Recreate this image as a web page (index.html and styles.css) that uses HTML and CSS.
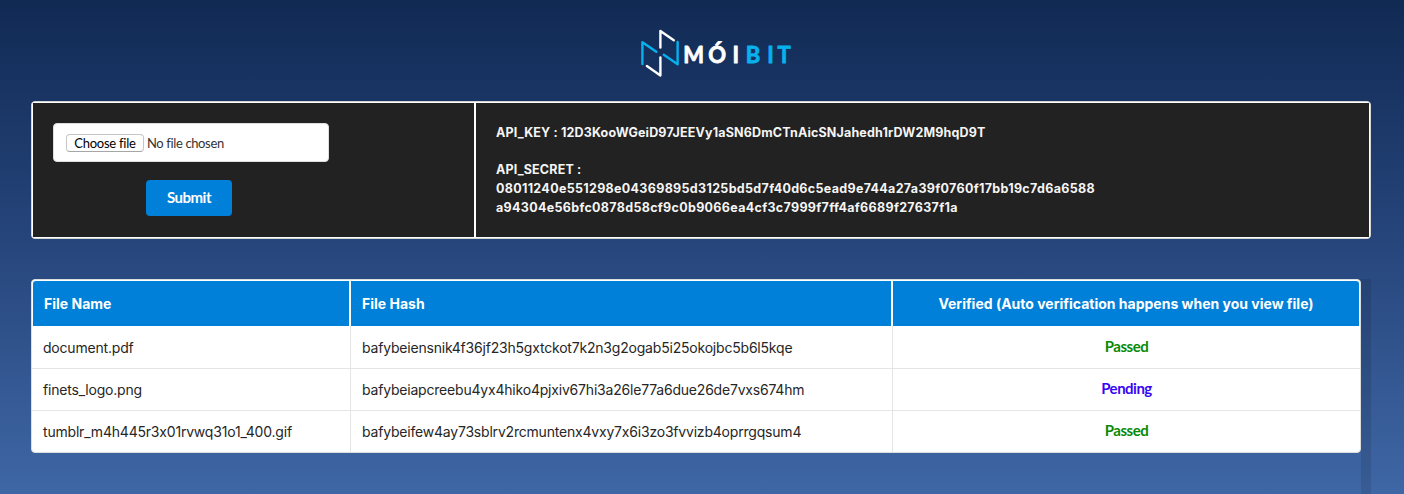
FILE: index.html
```
<!DOCTYPE html>
<html lang="en">
<head>
<meta charset="utf-8">
<title>MóiBit</title>
<link rel="stylesheet" href="styles.css">
</head>
<body>
<header class="brand">
  <svg class="logo" width="154" height="50" viewBox="639 28 154 50" fill="none" stroke-width="2.4" stroke-linejoin="round" stroke-linecap="round">
    <path class="stroke-white" d="M660.4 47.6V31l13.4 9.3M646.9 66l13.5 9.4V57.4"/>
    <path class="stroke-cyan" d="M642.4 64V42.2l13.9 9.6M677.6 42v22.2l-13.8-9.4"/>
    <text class="wordmark white" y="62.5" x="683.3 708.3 732.6">MÓI</text>
    <text class="wordmark cyan" y="62.5" x="745.8 767.3 777.4">BIT</text>
  </svg>
</header>
<main>
  <section class="panel">
    <form class="upload">
      <div class="file-field"><span class="choose">Choose file</span><span class="chosen">No file chosen</span></div>
      <button class="submit" type="button">Submit</button>
    </form>
    <div class="keys">
      <p class="api-key">API_KEY : 12D3KooWGeiD97JEEVy1aSN6DmCTnAicSNJahedh1rDW2M9hqD9T</p>
      <p class="secret-label">API_SECRET :</p>
      <p class="secret">08011240e551298e04369895d3125bd5d7f40d6c5ead9e744a27a39f0760f17bb19c7d6a6588<br>a94304e56bfc0878d58cf9c0b9066ea4cf3c7999f7ff4af6689f27637f1a</p>
    </div>
  </section>
  <section class="files">
    <div class="grid">
      <div class="row head"><div>File Name</div><div>File Hash</div><div>Verified (Auto verification happens when you view file)</div></div>
      <div class="row"><div>document.pdf</div><div>bafybeiensnik4f36jf23h5gxtckot7k2n3g2ogab5i25okojbc5b6l5kqe</div><div class="status passed">Passed</div></div>
      <div class="row"><div>finets_logo.png</div><div>bafybeiapcreebu4yx4hiko4pjxiv67hi3a26le77a6due26de7vxs674hm</div><div class="status pending">Pending</div></div>
      <div class="row"><div>tumblr_m4h445r3x01rvwq31o1_400.gif</div><div>bafybeifew4ay73sblrv2rcmuntenx4vxy7x6i3zo3fvvizb4oprrgqsum4</div><div class="status passed">Passed</div></div>
    </div>
    <div class="scroll-track"></div>
  </section>
</main>
</body>
</html>
```
FILE: styles.css
```
* { box-sizing: border-box; }
html { height: 100%; }
body {
  margin: 0;
  height: 494px;
  overflow: hidden;
  font-family: Inter, "Liberation Sans", sans-serif;
  font-feature-settings: "calt" 0;
  background: linear-gradient(#112a54 0, #26457b 240px, #3f67a5 494px);
}
p { margin: 0; }
.brand { height: 101px; padding: 28px 0 0 639px; }
.logo { display: block; }
.stroke-white { stroke: #fff; }
.stroke-cyan { stroke: #06b1ee; }
.wordmark { font: 700 22px Lato, sans-serif; stroke-width: 0.8; }
.white { fill: #fff; stroke: #fff; }
.cyan { fill: #06b1ee; stroke: #06b1ee; }
main { padding: 0 33px 0 31px; }
.panel {
  display: grid;
  grid-template-columns: 441px 1fr;
  gap: 2px;
  height: 138px;
  padding: 1px;
  border: 1px solid #d4d4d5;
  border-radius: 4px;
  background: #fff;
}
.upload, .keys { background: #222; }
.upload { padding: 20px; }
.file-field {
  display: flex;
  align-items: center;
  gap: 3px;
  width: 276px;
  height: 39px;
  padding-left: 12px;
  border: 1px solid #dededf;
  border-radius: 4px;
  background: #fff;
  font: 13px Lato, sans-serif;
}
.choose {
  width: 78px;
  height: 18px;
  line-height: 16px;
  text-align: center;
  border: 1px solid #c6c6c6;
  border-bottom-color: #a6a6a6;
  border-radius: 4px;
  color: #000;
  letter-spacing: -0.25px;
}
.chosen { color: #333; letter-spacing: -0.37px; }
.submit {
  display: block;
  width: 86px;
  height: 36px;
  margin: 18px 0 0 93px;
  padding: 0 0 2px;
  border: 0;
  border-radius: 4px;
  background: #0080d9;
  color: #fff;
  font: 700 15px Lato, sans-serif;
  letter-spacing: -0.5px;
}
.keys {
  padding: 20px;
  color: #f5f5f5;
  font-size: 12.5px;
  font-weight: 700;
  line-height: 19px;
}
.api-key { margin-bottom: 18px; }
.api-key, .secret-label { letter-spacing: 0.16px; }
.secret { letter-spacing: 0.32px; }
.files { display: flex; margin-top: 40px; height: 215px; }
.grid {
  width: 1330px;
  height: 174px;
  border: 1px solid #dcdddd;
  border-radius: 4px;
  background: #fff;
  overflow: hidden;
}
.scroll-track { width: 10px; background: rgba(0, 0, 0, .1); }
.row {
  display: grid;
  grid-template-columns: 319px 542px 1fr;
  height: 42px;
  border-top: 1px solid #e5e5e6;
  color: #262626;
  font-size: 14px;
  line-height: 42px;
  letter-spacing: -0.2px;
}
.row > div { padding-left: 11px; border-right: 1px solid #e5e5e6; white-space: nowrap; }
.row > div:last-child { border-right: 0; }
.head + .row { border-top: 0; line-height: 43px; }
.head {
  grid-template-columns: 316px 540px 1fr;
  gap: 2px;
  height: 46px;
  padding: 1px 1px 0;
  border: 0;
  color: #fff;
  font-weight: 700;
  line-height: 45px;
  letter-spacing: 0;
}
.head > div { background: #0080d9; border: 0; }
.head > div:first-child { border-top-left-radius: 3px; }
.head > div:last-child { padding: 0; text-align: center; border-top-right-radius: 3px; }
.row > .status {
  padding: 0;
  text-align: center;
  font: 700 15px/39px Lato, sans-serif;
  letter-spacing: -0.5px;
}
.head + .row > .status { line-height: 41px; }
.passed { color: #078a07; }
.pending { color: #3906f5; }
```
